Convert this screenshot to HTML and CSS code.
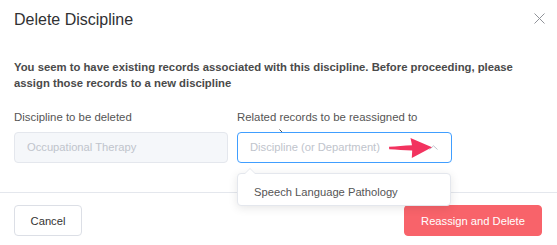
FILE: index.html
```html
<!DOCTYPE html>
<html>
<head>
<meta charset="utf-8">
<link rel="stylesheet" href="styles.css">
</head>
<body>
<div class="dialog">
  <div class="header">
    <span class="title">Delete Discipline</span>
    <svg class="close" width="11" height="11" viewBox="0 0 11 11"><path d="M0.5 0.5L10.5 10.5M10.5 0.5L0.5 10.5" stroke="#909399" stroke-width="1" fill="none"/></svg>
  </div>
  <div class="body">
    <p class="notice">You seem to have existing records associated with this discipline. Before proceeding, please assign those records to a new discipline</p>
    <div class="fields">
      <div class="field">
        <div class="label">Discipline to be deleted</div>
        <div class="input disabled">Occupational Therapy</div>
      </div>
      <div class="field">
        <div class="label">Related records to be reassigned to</div>
        <div class="select">
          <div class="input focused">
            <span>Discipline (or Department)</span>
            <svg class="chev" width="9" height="5" viewBox="0 0 9 5"><path d="M0.5 4.5L4.5 0.8L8.5 4.5" stroke="#c0c4cc" stroke-width="1" fill="none"/></svg>
          </div>
          <svg class="mark" width="4" height="4" viewBox="0 0 4 4"><path d="M0.5 0.5L3 3" stroke="#555" stroke-width="1"/></svg>
          <svg class="arrow" width="46" height="22" viewBox="0 0 46 22"><path d="M1 9.8 C9 9.2 16 8.6 24 8.2 L22.5 1 L44 10.2 L23.8 21 L24.2 13.6 C16 13.2 9 12.6 1.2 12.2 Z" fill="#f2335f"/></svg>
          <div class="dropdown">
            <div class="pop-arrow"></div>
            <div class="option">Speech Language Pathology</div>
          </div>
        </div>
      </div>
    </div>
  </div>
  <div class="footer">
    <button class="btn cancel">Cancel</button>
    <button class="btn danger">Reassign and Delete</button>
  </div>
</div>
</body>
</html>
```

FILE: styles.css
```css
* { box-sizing: border-box; }
html, body { margin: 0; padding: 0; background: #fff; }
body {
  font-family: "Liberation Sans", Arial, sans-serif;
  color: #303133;
  width: 557px;
  height: 245px;
  overflow: hidden;
}
.dialog { width: 557px; }
.header {
  display: flex;
  justify-content: space-between;
  align-items: flex-start;
  padding: 9px 12px 0 14px;
  height: 30px;
}
.title { font-size: 16px; line-height: 21px; color: #303133; }
.close { margin-top: 4px; }
.body { padding: 29px 14px 29px; }
.notice {
  margin: 0 0 18px;
  font-size: 11.3px;
  line-height: 16px;
  font-weight: bold;
  color: #4a4a4a;
  width: 510px;
}
.fields {
  display: grid;
  grid-template-columns: 214px 215px;
  column-gap: 9px;
}
.label {
  font-size: 11.4px;
  line-height: 16px;
  color: #555;
  margin-bottom: 7px;
}
.input {
  height: 31px;
  border: 1px solid #dcdfe6;
  border-radius: 4px;
  padding: 0 12px;
  font-size: 11.2px;
  line-height: 29px;
  color: #c0c4cc;
  display: flex;
  justify-content: space-between;
  align-items: center;
}
.input.disabled { background: #f5f7fa; border-color: #e4e7ed; }
.input.focused { border-color: #409eff; }
.chev { margin-right: 1px; }
.select { position: relative; }
.arrow { position: absolute; left: 151px; top: 5px; }
.mark { position: absolute; left: 42px; top: -3px; }
.dropdown {
  position: absolute;
  left: 0;
  top: 41px;
  width: 214px;
  height: 33px;
  background: #fff;
  border: 1px solid #e4e7ed;
  border-radius: 4px;
  box-shadow: 0 2px 10px 0 rgba(0,0,0,0.1);
  z-index: 2;
}
.pop-arrow {
  position: absolute;
  left: 6px;
  top: -6px;
  width: 0;
  height: 0;
  border-left: 6px solid transparent;
  border-right: 6px solid transparent;
  border-bottom: 6px solid #e4e7ed;
}
.pop-arrow::after {
  content: "";
  position: absolute;
  left: -5px;
  top: 1px;
  border-left: 5px solid transparent;
  border-right: 5px solid transparent;
  border-bottom: 5px solid #fff;
}
.option {
  padding: 0 16px;
  font-size: 11.2px;
  line-height: 31px;
  padding-top: 3px;
  color: #555;
}
.footer {
  border-top: 1px solid #e4e7ed;
  padding: 12px 15px 0 14px;
  display: flex;
  justify-content: space-between;
}
.btn {
  height: 31px;
  border-radius: 4px;
  font-family: "Liberation Sans", Arial, sans-serif;
  font-size: 11.2px;
  cursor: pointer;
}
.cancel {
  width: 68px;
  background: #fff;
  border: 1px solid #dcdfe6;
  color: #333;
}
.danger {
  width: 138px;
  background: #f8636a;
  border: 1px solid #f8636a;
  color: #fff;
}
```
